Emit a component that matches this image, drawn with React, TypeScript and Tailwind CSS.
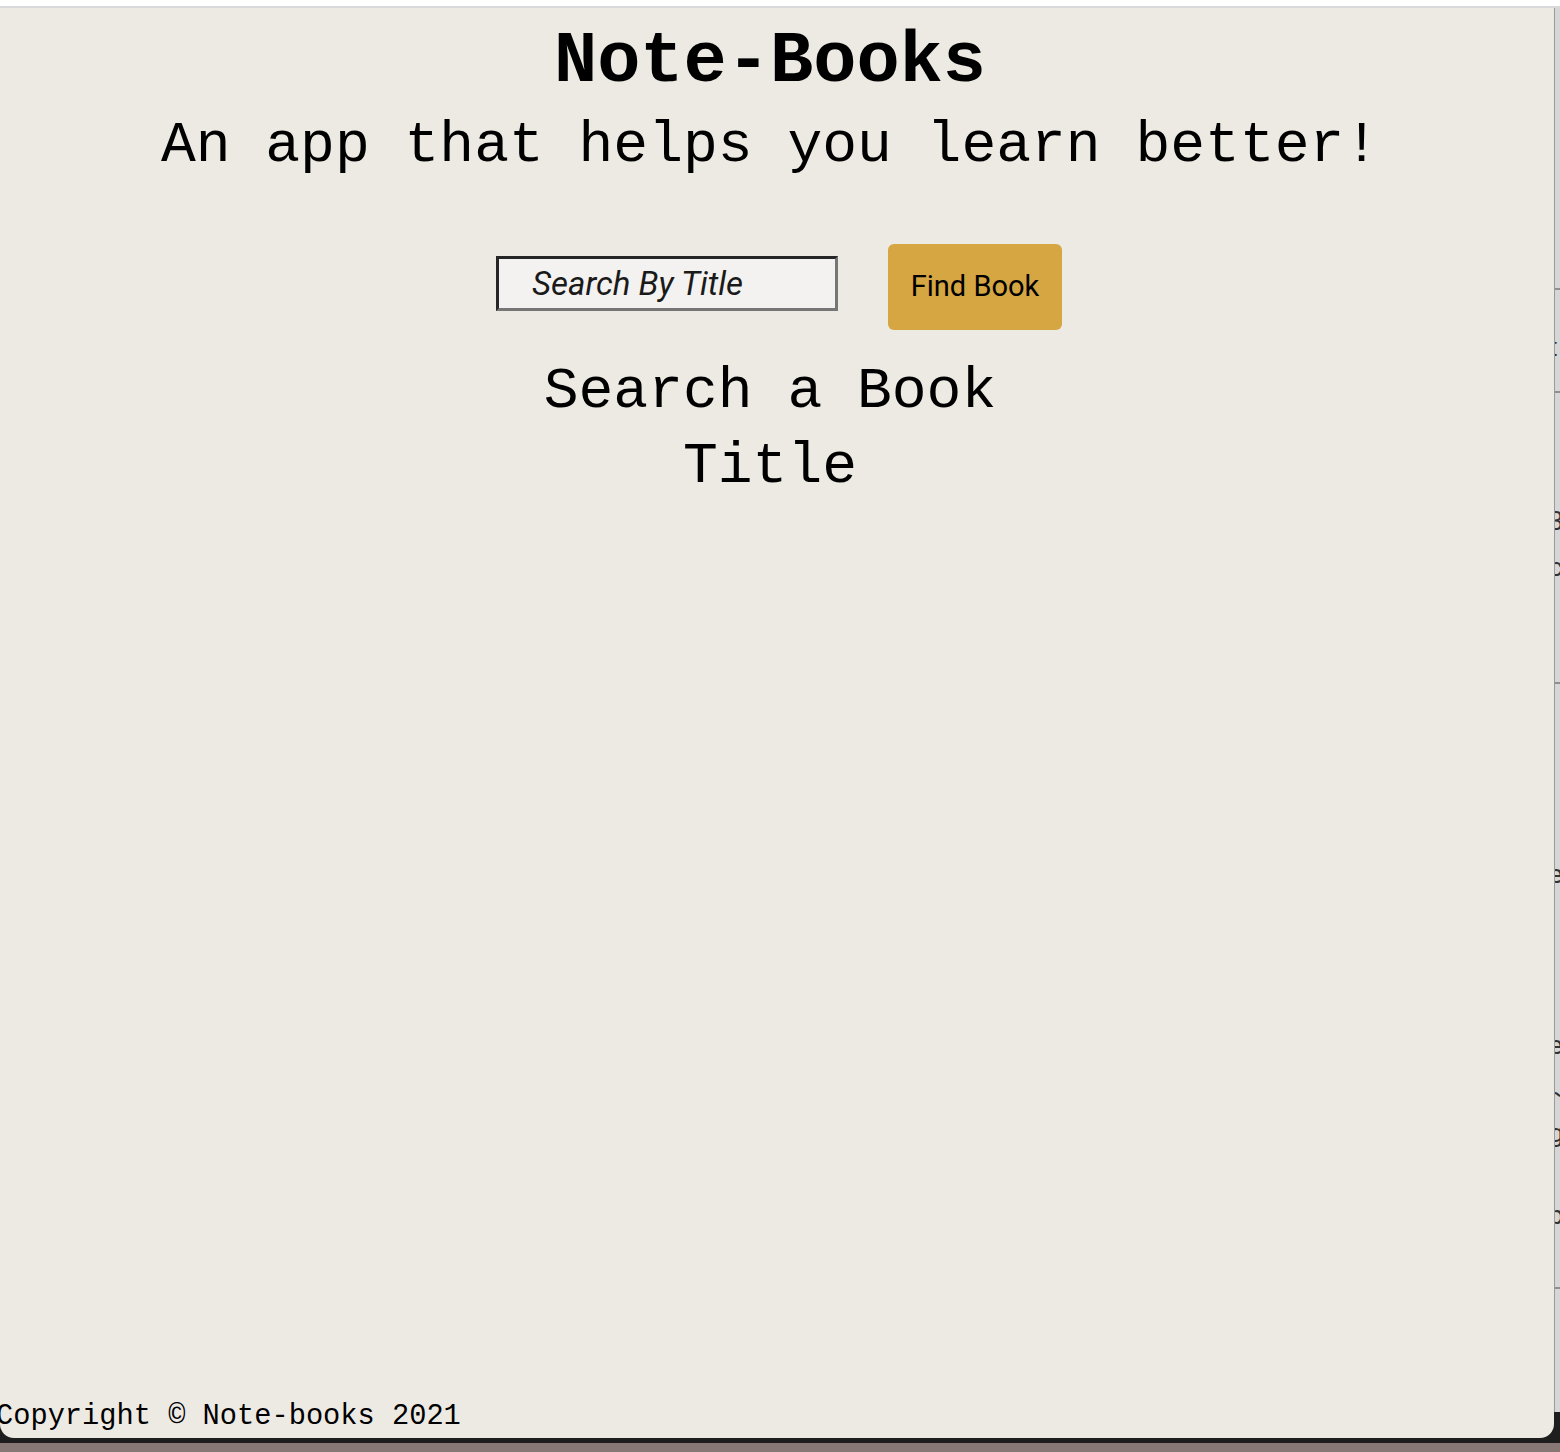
const mono = { fontFamily: '"Liberation Mono", "DejaVu Sans Mono", monospace' }

const sideMarks = [
  { top: 280, ch: '', line: true },
  { top: 326, ch: 't' },
  { top: 383, ch: '', line: true },
  { top: 500, ch: '3' },
  { top: 546, ch: 'c' },
  { top: 674, ch: '', line: true },
  { top: 853, ch: 'e' },
  { top: 1024, ch: 'e' },
  { top: 1072, ch: '~' },
  { top: 1112, ch: 'g' },
  { top: 1194, ch: 'p' },
  { top: 1279, ch: '', line: true },
]

function SideStrip() {
  return (
    <div className="flex-1 flex flex-col">
      <div className="relative h-[1404px] bg-[#d6d6d6] border-l border-[#9a9a9a] overflow-hidden">
        {sideMarks.map((m, i) =>
          m.line ? (
            <div key={i} className="absolute left-0 right-0 h-[2px] bg-[#8f8f8f]" style={{ top: m.top }} />
          ) : (
            <span
              key={i}
              className="absolute left-[-6px] text-[26px] leading-none text-[#333] font-['Roboto',sans-serif]"
              style={{ top: m.top }}
            >
              {m.ch}
            </span>
          )
        )}
      </div>
    </div>
  )
}

export default function App() {
  return (
    <div className="w-[1560px] h-[1452px] flex flex-col bg-[#877876] overflow-hidden">
      <div className="h-[6px] bg-white" />
      <div className="h-[2px] bg-[#d9d9dc]" />
      <div className="h-[1435px] flex bg-[#1e1e1e]">
        <div className="w-[1554px] h-[1430px] rounded-b-[14px] bg-[#edeae4] flex flex-col pr-[14px] overflow-hidden">
          <div className="flex-1 flex flex-col items-center text-black" style={mono}>
            <h1 className="mt-[13px] text-[72px] leading-[82px] font-bold">Note-Books</h1>
            <h2 className="mt-[8px] text-[58px] leading-[70px]">An app that helps you learn better!</h2>

            <div className="mt-[63px] ml-[18px] flex items-start gap-[50px]">
              <input
                type="text"
                placeholder="Search By Title"
                className="mt-[12px] w-[342px] h-[55px] pl-[33px] bg-[#f3f2f0] border-[3px] border-t-[#262626] border-l-[#262626] border-b-[#767676] border-r-[#767676] outline-none text-[33px] font-['Roboto',sans-serif] placeholder:italic placeholder:text-[#1a1a1a]"
              />
              <button className="w-[174px] h-[86px] rounded-[6px] bg-[#d6a642] text-[29px] text-black font-['Roboto',sans-serif]">
                Find Book
              </button>
            </div>

            <p className="mt-[24px] w-[560px] text-center text-[58px] leading-[75px]">Search a Book Title</p>
          </div>

          <footer className="ml-[-4px] mb-[4px] text-[28.7px] leading-[34px] text-black" style={mono}>
            Copyright © Note-books 2021
          </footer>
        </div>
        <SideStrip />
      </div>
    </div>
  )
}
